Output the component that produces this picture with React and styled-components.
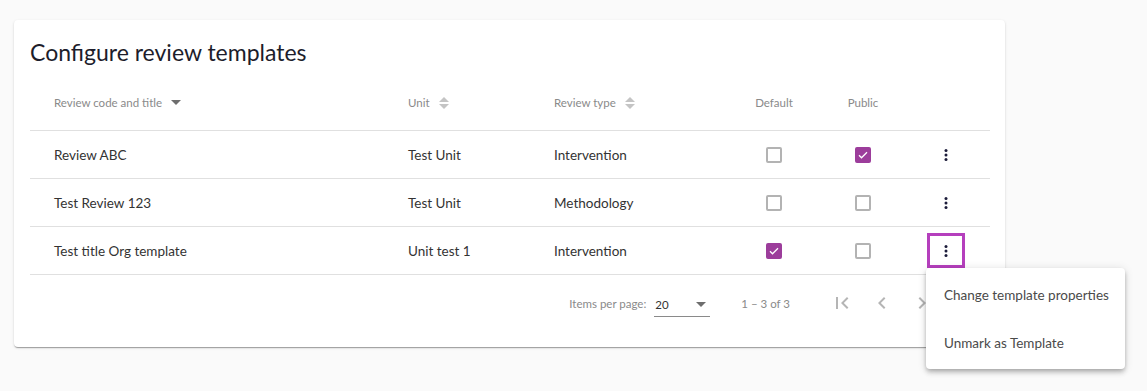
import React from "react";
import styled, { createGlobalStyle } from "styled-components";

const Global = createGlobalStyle`
  html, body { margin: 0; padding: 0; background: #fafafa; }
  body { font-family: Lato, "Noto Sans", sans-serif; }
`;

const Page = styled.div`
  width: 1147px;
  height: 391px;
  box-sizing: border-box;
  padding: 20px 0 0 14px;
  background: #fafafa;
`;

const Card = styled.div`
  width: 991px;
  box-sizing: border-box;
  background: #fff;
  border-radius: 4px;
  padding: 16px 15px 16px 16px;
  box-shadow: 0 2px 1px -1px rgba(0,0,0,.2), 0 1px 1px 0 rgba(0,0,0,.14), 0 1px 3px 0 rgba(0,0,0,.12);
`;

const Title = styled.h1`
  margin: 0 0 7px;
  font-size: 23px;
  line-height: 32px;
  font-weight: 400;
  color: #1d1d2b;
`;

const cols = "378px 146px 175px 90px 88px 83px";

const HeaderRow = styled.div`
  display: grid;
  grid-template-columns: ${cols};
  height: 56px;
  border-bottom: 1px solid #e0e0e0;
  box-sizing: border-box;
  align-items: center;
`;

const HeadCell = styled.div`
  display: flex;
  align-items: center;
  justify-content: ${(p) => (p.$center ? "center" : "flex-start")};
  padding-left: ${(p) => (p.$first ? "24px" : "0")};
  font-size: 11.5px;
  color: #8a8a8a;
  gap: 9px;
`;

const Row = styled.div`
  display: grid;
  grid-template-columns: ${cols};
  height: 48px;
  border-bottom: 1px solid #e0e0e0;
  box-sizing: border-box;
  align-items: center;
`;

const Cell = styled.div`
  display: flex;
  align-items: center;
  justify-content: ${(p) => (p.$center ? "center" : "flex-start")};
  padding-left: ${(p) => (p.$first ? "24px" : "0")};
  padding-right: ${(p) => (p.$pr || 0)}px;
  font-size: 13.5px;
  color: #333;
`;

const Box = styled.span`
  width: 16px;
  height: 16px;
  box-sizing: border-box;
  border-radius: 2px;
  border: 2px solid ${(p) => (p.$checked ? "#9c3d9b" : "#b3b3b3")};
  background: ${(p) => (p.$checked ? "#9c3d9b" : "transparent")};
  display: flex;
  align-items: center;
  justify-content: center;
`;

const KebabWrap = styled.div`
  position: relative;
`;

const Kebab = styled.button`
  width: 32px;
  height: 29px;
  border: none;
  background: transparent;
  padding: 0;
  display: flex;
  align-items: center;
  justify-content: center;
  outline: ${(p) => (p.$focused ? "3px solid #b53fbd" : "none")};
  cursor: pointer;
`;

const Menu = styled.div`
  position: absolute;
  top: 32px;
  left: -4px;
  width: 199px;
  padding: 3px 0 2px;
  background: #fff;
  border-radius: 4px;
  box-shadow: 0 2px 4px -1px rgba(0,0,0,.2), 0 4px 5px 0 rgba(0,0,0,.14), 0 1px 10px 0 rgba(0,0,0,.12);
  z-index: 10;
`;

const MenuItem = styled.div`
  height: 48px;
  display: flex;
  align-items: center;
  padding: 0 16px 0 18px;
  font-size: 13.5px;
  color: #4a4a4a;
  white-space: nowrap;
`;

const Paginator = styled.div`
  height: 56px;
  display: flex;
  align-items: center;
  justify-content: flex-end;
  padding-right: 8px;
  font-size: 11.5px;
  color: #8a8a8a;
`;

const PageSize = styled.div`
  display: flex;
  align-items: center;
  margin-right: 31px;
`;

const Select = styled.div`
  width: 56px;
  margin-left: 8px;
  height: 24px;
  box-sizing: border-box;
  border-bottom: 1px solid #8a8a8a;
  display: flex;
  align-items: center;
  justify-content: space-between;
  padding: 0 4px 0 1px;
  color: #333;
  margin-top: 4px;
`;

const Range = styled.div`
  margin-right: 32px;
`;

const PageBtn = styled.div`
  width: 40px;
  height: 40px;
  display: flex;
  align-items: center;
  justify-content: center;
  color: #b5b5b5;
`;

const SortDown = () => (
  <svg width="10" height="6" viewBox="0 0 10 6"><path d="M0 0h10L5 5z" fill="#6e6e6e" /></svg>
);
const SortBoth = () => (
  <svg width="10" height="12" viewBox="0 0 10 12">
    <path d="M0 5L5 0l5 5z" fill="#c4c4c4" />
    <path d="M0 7h10l-5 5z" fill="#c4c4c4" />
  </svg>
);
const Check = () => (
  <svg width="12" height="12" viewBox="0 0 24 24"><path d="M4 12.5l5 5L20 6.5" fill="none" stroke="#fff" strokeWidth="2.6" /></svg>
);
const Dots = () => (
  <svg width="4" height="14" viewBox="0 0 4 14">
    <circle cx="2" cy="2.5" r="1.5" fill="#1c1c3a" />
    <circle cx="2" cy="7" r="1.5" fill="#1c1c3a" />
    <circle cx="2" cy="11.5" r="1.5" fill="#1c1c3a" />
  </svg>
);
const Chev = ({ d }) => (
  <svg width="24" height="24" viewBox="0 0 24 24"><path d={d} fill="currentColor" /></svg>
);

const rows = [
  { title: "Review ABC", unit: "Test Unit", type: "Intervention", def: false, pub: true },
  { title: "Test Review 123", unit: "Test Unit", type: "Methodology", def: false, pub: false },
  { title: "Test title Org template", unit: "Unit test 1", type: "Intervention", def: true, pub: false, open: true },
];

export default function App() {
  return (
    <Page>
      <Global />
      <Card>
        <Title>Configure review templates</Title>
        <HeaderRow>
          <HeadCell $first>Review code and title <SortDown /></HeadCell>
          <HeadCell>Unit <SortBoth /></HeadCell>
          <HeadCell>Review type <SortBoth /></HeadCell>
          <HeadCell $center>Default</HeadCell>
          <HeadCell $center>Public</HeadCell>
          <HeadCell />
        </HeaderRow>
        {rows.map((r) => (
          <Row key={r.title}>
            <Cell $first>{r.title}</Cell>
            <Cell>{r.unit}</Cell>
            <Cell>{r.type}</Cell>
            <Cell $center><Box $checked={r.def}>{r.def && <Check />}</Box></Cell>
            <Cell $center><Box $checked={r.pub}>{r.pub && <Check />}</Box></Cell>
            <Cell $center $pr={5}>
              <KebabWrap>
                <Kebab $focused={r.open}><Dots /></Kebab>
                {r.open && (
                  <Menu>
                    <MenuItem>Change template properties</MenuItem>
                    <MenuItem>Unmark as Template</MenuItem>
                  </Menu>
                )}
              </KebabWrap>
            </Cell>
          </Row>
        ))}
        <Paginator>
          <PageSize>
            Items per page:
            <Select>20 <SortDown /></Select>
          </PageSize>
          <Range>1 – 3 of 3</Range>
          <PageBtn><Chev d="M18.41 16.59L13.82 12l4.59-4.59L17 6l-6 6 6 6zM6 6h2v12H6z" /></PageBtn>
          <PageBtn><Chev d="M15.41 7.41L14 6l-6 6 6 6 1.41-1.41L10.83 12z" /></PageBtn>
          <PageBtn><Chev d="M10 6L8.59 7.41 13.17 12l-4.58 4.59L10 18l6-6z" /></PageBtn>
          <PageBtn><Chev d="M5.59 7.41L10.18 12l-4.59 4.59L7 18l6-6-6-6zM16 6h2v12h-2z" /></PageBtn>
        </Paginator>
      </Card>
    </Page>
  );
}
